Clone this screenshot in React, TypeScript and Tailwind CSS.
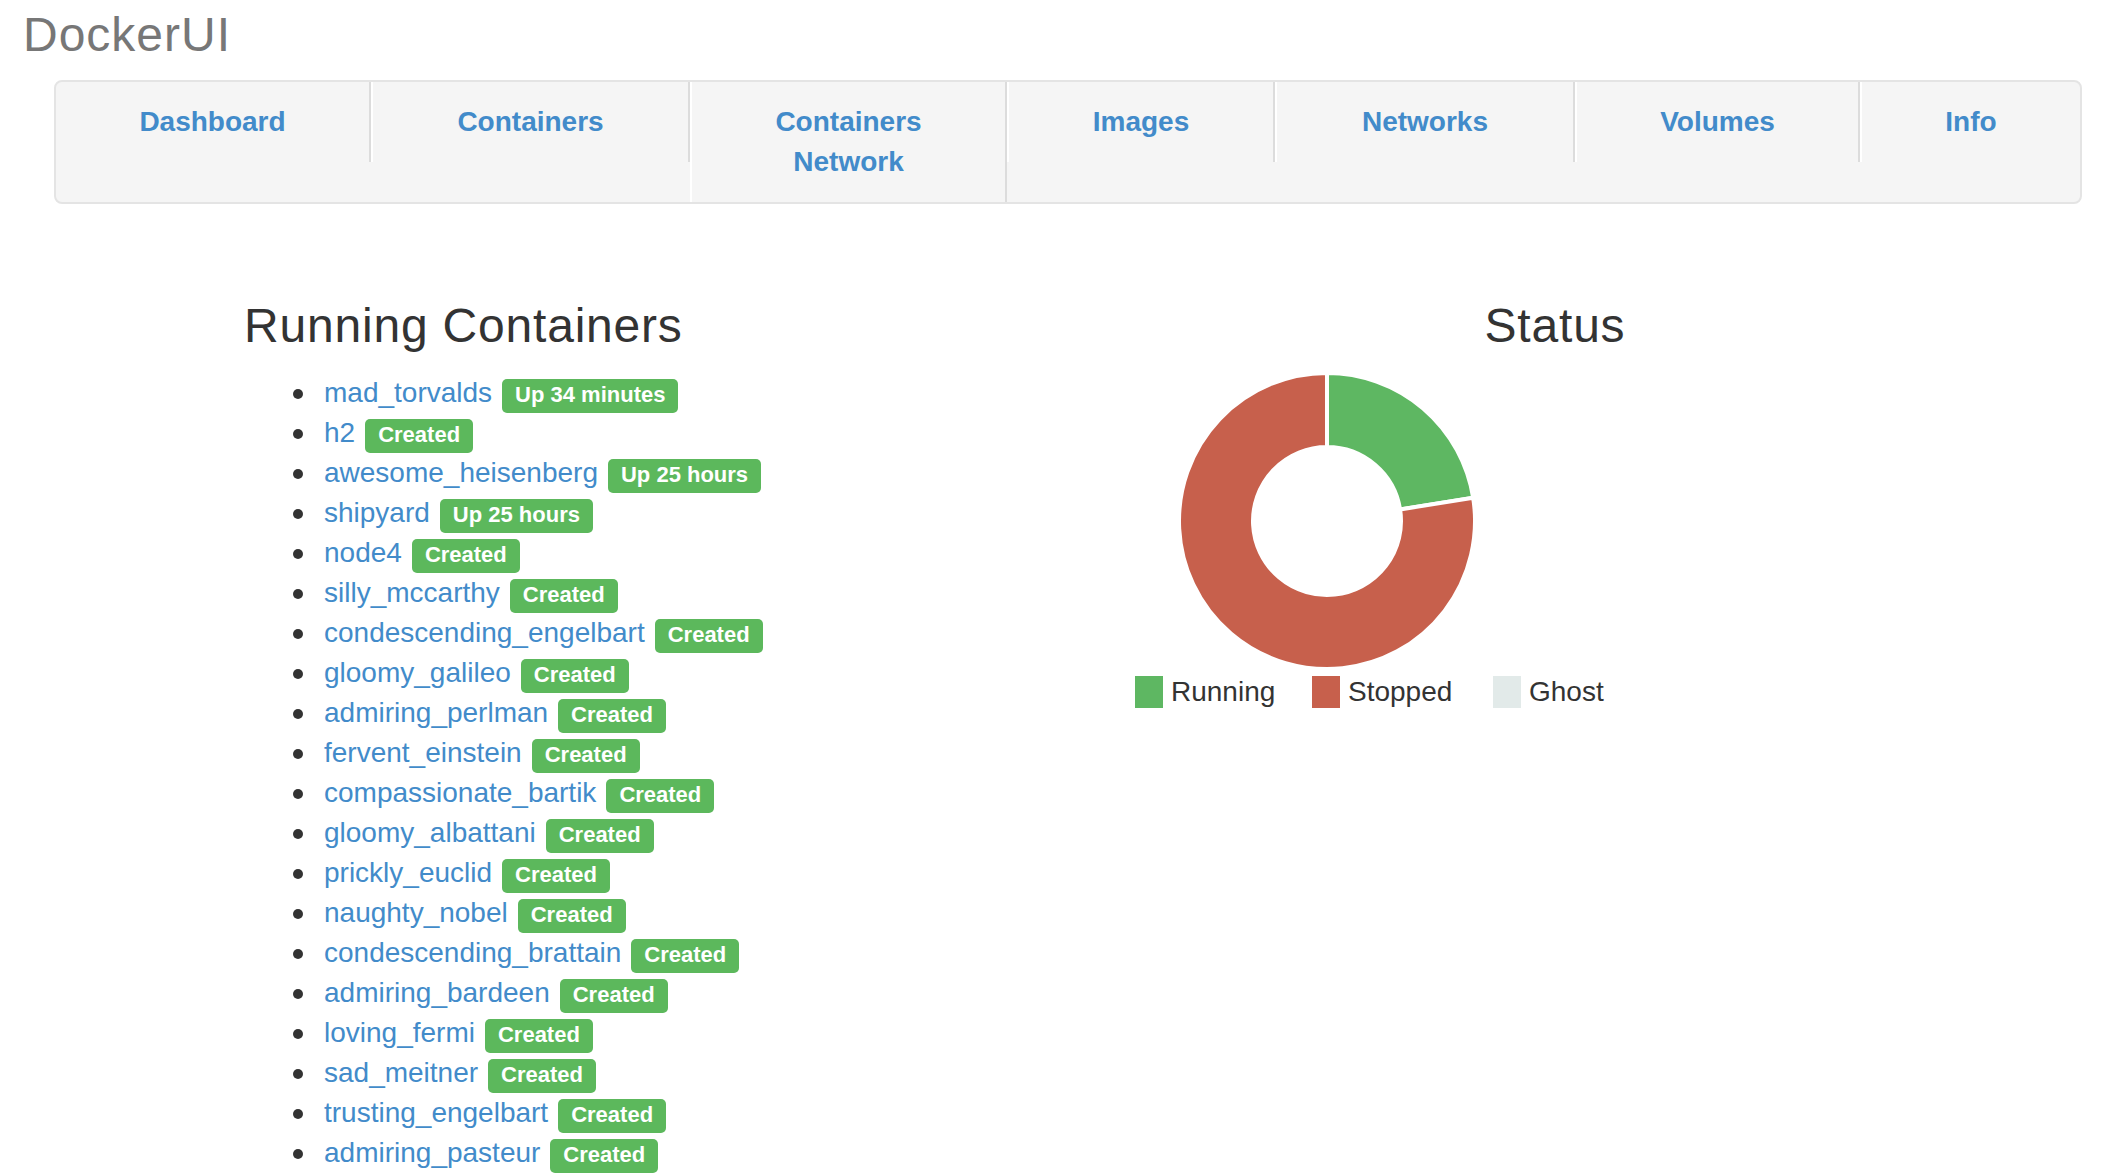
import type { ReactElement } from 'react'

const tabs = [
  { label: 'Dashboard', w: 'w-[315px]' },
  { label: 'Containers', w: 'w-[319px]' },
  { label: 'Containers Network', w: 'w-[317px]' },
  { label: 'Images', w: 'w-[268px]' },
  { label: 'Networks', w: 'w-[300px]' },
  { label: 'Volumes', w: 'w-[285px]' },
  { label: 'Info', w: 'flex-1' },
]

const containers: [string, string][] = [
  ['mad_torvalds', 'Up 34 minutes'],
  ['h2', 'Created'],
  ['awesome_heisenberg', 'Up 25 hours'],
  ['shipyard', 'Up 25 hours'],
  ['node4', 'Created'],
  ['silly_mccarthy', 'Created'],
  ['condescending_engelbart', 'Created'],
  ['gloomy_galileo', 'Created'],
  ['admiring_perlman', 'Created'],
  ['fervent_einstein', 'Created'],
  ['compassionate_bartik', 'Created'],
  ['gloomy_albattani', 'Created'],
  ['prickly_euclid', 'Created'],
  ['naughty_nobel', 'Created'],
  ['condescending_brattain', 'Created'],
  ['admiring_bardeen', 'Created'],
  ['loving_fermi', 'Created'],
  ['sad_meitner', 'Created'],
  ['trusting_engelbart', 'Created'],
  ['admiring_pasteur', 'Created'],
]

function Navbar(): ReactElement {
  return (
    <ul className="ml-[54px] mr-[34px] flex items-start rounded-[8px] border-2 border-[#e4e4e4] bg-[#f5f5f5]">
      {tabs.map((t, i) => (
        <li
          key={t.label}
          className={`${t.w} ${i > 0 ? 'border-l-2 border-l-white' : ''} ${
            i < tabs.length - 1 ? 'border-r-2 border-r-[#dcdcdc]' : ''
          }`}
        >
          <a className="block px-[30px] py-[20px] text-center text-[28px] font-bold leading-[40px] text-[#428bca]">
            {t.label}
          </a>
        </li>
      ))}
    </ul>
  )
}

function StatusChart(): ReactElement {
  // running ~22.5%, stopped the rest, ghost 0
  return (
    <svg width="300" height="300" viewBox="0 0 300 300" className="ml-[42px] mt-[18px] block">
      <path
        d="M150 2 A148 148 0 0 1 296.18 126.85 L223.09 138.42 A74 74 0 0 0 150 76 Z"
        fill="#5eb762"
        stroke="#fff"
        strokeWidth="4"
      />
      <path
        d="M296.18 126.85 A148 148 0 1 1 150 2 L150 76 A74 74 0 1 0 223.09 138.42 Z"
        fill="#c7604c"
        stroke="#fff"
        strokeWidth="4"
      />
    </svg>
  )
}

export default function App(): ReactElement {
  return (
    <div className="h-screen overflow-hidden bg-white font-['Liberation_Sans',Arial,sans-serif] text-[#333]">
      <div className="h-[80px] pl-[23px] pt-[9px] text-[48px] leading-[52.8px] tracking-[1px] text-[#777]">
        DockerUI
      </div>
      <Navbar />
      <div className="flex pt-[96px]">
        <div className="w-[1135px] pl-[244px]">
          <h3 className="text-[48px] leading-[52.8px] tracking-[0.8px]">Running Containers</h3>
          <ul className="mt-[20px] pl-[80px]">
            {containers.map(([name, status]) => (
              <li key={name} className="text-[28px] leading-[40px]">
                <span className="-ml-[31px] mr-[21px] inline-block h-[10px] w-[10px] rounded-full bg-[#333] align-middle" />
                <a className="text-[#428bca]">{name}</a>
                <span className="ml-[10px] inline-block rounded-[5px] bg-[#5cb85c] px-[13px] pb-[7px] pt-[5px] align-baseline text-[22px] font-bold leading-none text-white">
                  {status}
                </span>
              </li>
            ))}
          </ul>
        </div>
        <div className="w-[840px]">
          <h3 className="text-center text-[48px] leading-[52.8px] tracking-[0.8px]">Status</h3>
          <StatusChart />
          <ul className="mt-[5px] flex text-[28px] leading-[32px]">
            <li className="flex w-[177px] items-center gap-[8px]">
              <span className="h-[32px] w-[28px] bg-[#5eb762]" />
              Running
            </li>
            <li className="flex w-[181px] items-center gap-[8px]">
              <span className="h-[32px] w-[28px] bg-[#c7604c]" />
              Stopped
            </li>
            <li className="flex items-center gap-[8px]">
              <span className="h-[32px] w-[28px] bg-[#e2eae9]" />
              Ghost
            </li>
          </ul>
        </div>
      </div>
    </div>
  )
}
